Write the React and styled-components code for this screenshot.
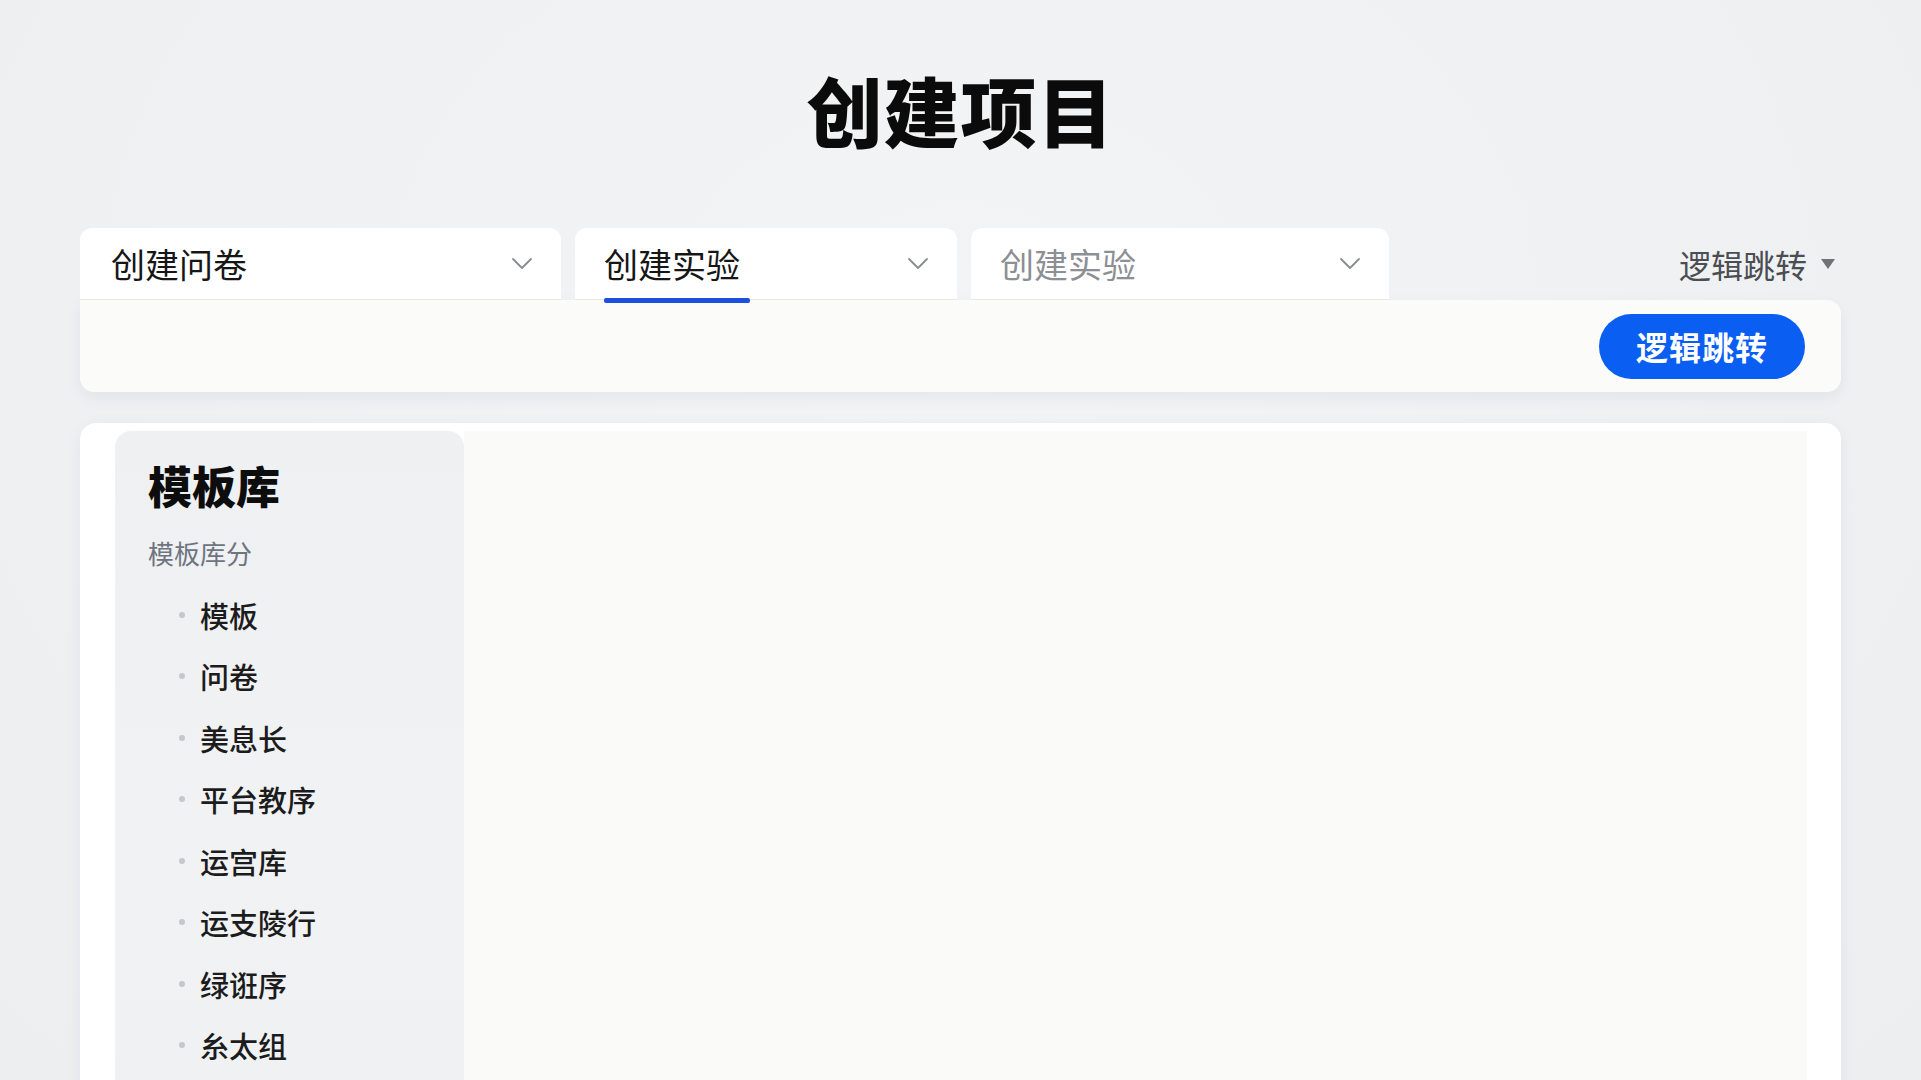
import React from 'react';
import styled, { createGlobalStyle } from 'styled-components';

const GlobalStyle = createGlobalStyle`
  html, body {
    margin: 0;
    padding: 0;
    background: #eef0f2;
    font-family: "Noto Sans CJK SC", "Noto Sans", sans-serif;
  }
  * { box-sizing: border-box; }
`;

const Page = styled.div`
  height: 1080px;
  overflow: hidden;
  padding: 0 80px;
  background: radial-gradient(ellipse at 50% 30%, #f3f4f5 0%, #eceef0 100%);
`;

const Title = styled.h1`
  margin: 0;
  padding-top: 55px;
  line-height: 108px;
  font-size: 76px;
  font-weight: 900;
  text-align: center;
  color: #0b0b0b;
  letter-spacing: 1px;
`;

const TabRow = styled.div`
  display: flex;
  align-items: stretch;
  gap: 14px;
  height: 72px;
  margin-top: 65px;
`;

const Tab = styled.div`
  position: relative;
  width: ${p => p.width}px;
  display: flex;
  align-items: center;
  justify-content: space-between;
  padding: 0 28px 0 ${p => p.padLeft || 31}px;
  background: #fff;
  border-radius: 12px 12px 0 0;
  border-bottom: 1px solid #e6e7e8;
  font-size: 34px;
  color: ${p => (p.muted ? '#8c8f93' : '#161616')};
`;

const TabLabel = styled.span`
  position: relative;
  line-height: 72px;

  ${p => p.active && `
    &::after {
      content: '';
      position: absolute;
      left: 0;
      right: -10px;
      bottom: -3px;
      height: 5px;
      border-radius: 2px;
      background: #1d4fe0;
    }
  `}
`;

const RightLink = styled.div`
  margin-left: auto;
  display: flex;
  align-items: center;
  gap: 14px;
  padding-right: 6px;
  font-size: 32px;
  color: #4a4d52;
`;

const Caret = styled.span`
  width: 0;
  height: 0;
  border-left: 7px solid transparent;
  border-right: 7px solid transparent;
  border-top: 10px solid #6f7378;
`;

const Toolbar = styled.div`
  height: 92px;
  display: flex;
  align-items: center;
  justify-content: flex-end;
  padding-right: 36px;
  background: #fbfbf9;
  border-radius: 0 14px 14px 14px;
  box-shadow: 0 6px 16px rgba(30, 40, 60, 0.06);
`;

const PrimaryButton = styled.button`
  width: 206px;
  height: 65px;
  border: none;
  border-radius: 33px;
  background: #0a5ef2;
  color: #fff;
  font-family: inherit;
  font-size: 32px;
  font-weight: 700;
  letter-spacing: 1px;
  cursor: pointer;
`;

const MainPanel = styled.div`
  margin-top: 31px;
  height: 700px;
  display: flex;
  padding: 8px 34px 0 35px;
  background: #fff;
  border-radius: 16px 16px 0 0;
  box-shadow: 0 4px 18px rgba(30, 40, 60, 0.05);
`;

const Sidebar = styled.aside`
  width: 349px;
  flex-shrink: 0;
  padding: 24px 0 0 33px;
  border-radius: 16px 16px 0 0;
  background: linear-gradient(180deg, #eef0f2 0%, #f1f2f4 60%, #eff1f3 100%);
`;

const SidebarTitle = styled.h2`
  margin: 0;
  font-size: 44px;
  line-height: 60px;
  font-weight: 900;
  color: #0d0d0d;
`;

const SidebarSub = styled.div`
  margin-top: 20px;
  font-size: 26px;
  line-height: 36px;
  color: #6e7480;
`;

const List = styled.ul`
  list-style: none;
  margin: 13px 0 0;
  padding: 0 0 0 31px;
`;

const Item = styled.li`
  display: flex;
  align-items: center;
  gap: 15px;
  height: 61.5px;
  font-size: 29px;
  font-weight: 500;
  color: #1c1c1c;

  &::before {
    content: '';
    width: 6px;
    height: 6px;
    border-radius: 50%;
    background: #c4c7cb;
  }
`;

const Content = styled.div`
  flex: 1;
  background: #fafaf8;
`;

const Chevron = () => (
  <svg width="22" height="14" viewBox="0 0 22 14" fill="none">
    <polyline points="2,2 11,11 20,2" stroke="#8a8d91" strokeWidth="1.8" strokeLinecap="round" strokeLinejoin="round" />
  </svg>
);

const items = ['模板', '问卷', '美息长', '平台教序', '运宫库', '运支陵行', '绿诳序', '糸太组'];

export default function App() {
  return (
    <>
      <GlobalStyle />
      <Page>
        <Title>创建项目</Title>
        <TabRow>
          <Tab width={481}>
            <TabLabel>创建问卷</TabLabel>
            <Chevron />
          </Tab>
          <Tab width={382} padLeft={29}>
            <TabLabel active>创建实验</TabLabel>
            <Chevron />
          </Tab>
          <Tab width={418} padLeft={29} muted>
            <TabLabel>创建实验</TabLabel>
            <Chevron />
          </Tab>
          <RightLink>
            逻辑跳转
            <Caret />
          </RightLink>
        </TabRow>
        <Toolbar>
          <PrimaryButton>逻辑跳转</PrimaryButton>
        </Toolbar>
        <MainPanel>
          <Sidebar>
            <SidebarTitle>模板库</SidebarTitle>
            <SidebarSub>模板库分</SidebarSub>
            <List>
              {items.map(t => (
                <Item key={t}>{t}</Item>
              ))}
            </List>
          </Sidebar>
          <Content />
        </MainPanel>
      </Page>
    </>
  );
}
